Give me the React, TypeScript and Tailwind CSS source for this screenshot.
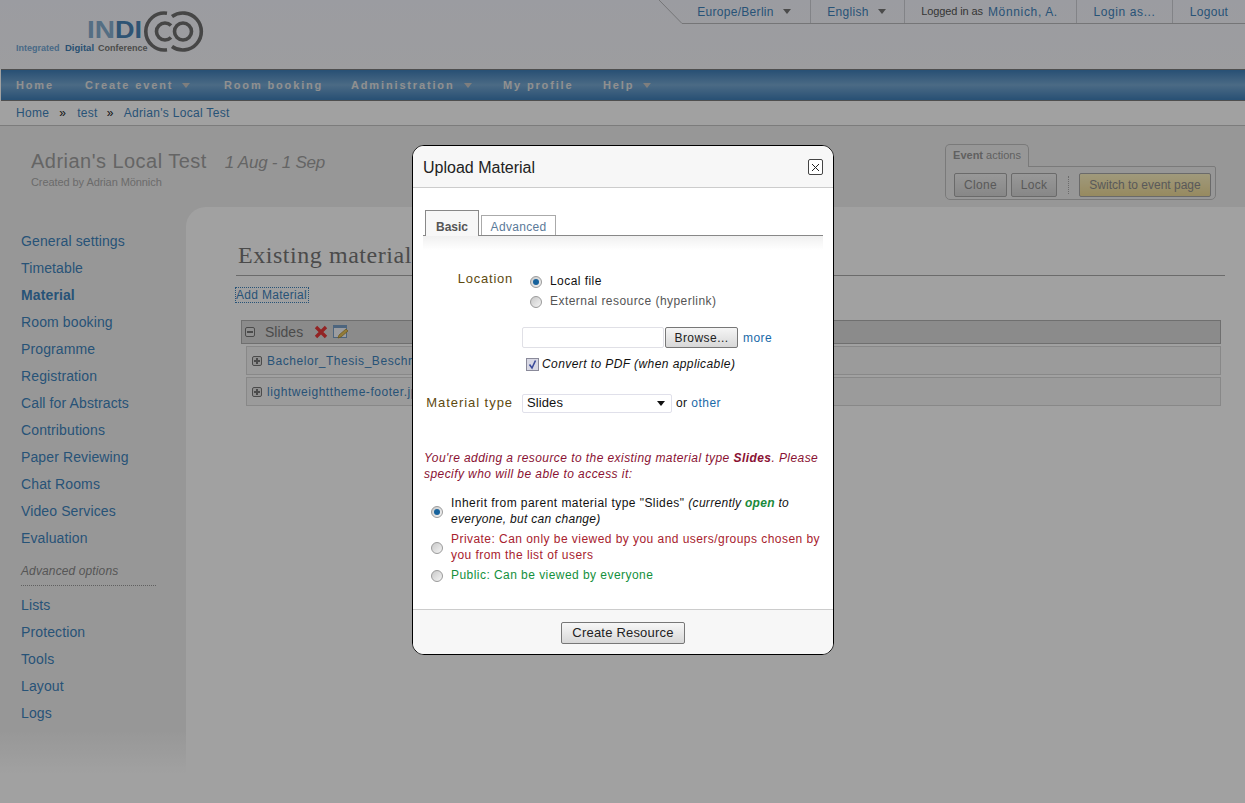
const sideTop = ["General settings", "Timetable", "Material", "Room booking", "Programme", "Registration", "Call for Abstracts", "Contributions", "Paper Reviewing", "Chat Rooms", "Video Services", "Evaluation"];
const sideBottom = ["Lists", "Protection", "Tools", "Layout", "Logs"];

function Caret({ className = "border-t-[#c8c8c8]" }: { className?: string }) {
  return <span className={`inline-block w-0 h-0 border-x-[4.5px] border-x-transparent border-t-[5px] ${className}`} />;
}

function Logo() {
  return (
    <svg width="200" height="50" viewBox="0 0 200 50" className="block">
      <text x="71" y="32" fontFamily="Liberation Sans" fontWeight="700" fontSize="24" fill="#86aed0" textLength="28" lengthAdjust="spacingAndGlyphs">IN</text>
      <text x="99" y="32" fontFamily="Liberation Sans" fontWeight="700" fontSize="24" fill="#4a85b8" textLength="27" lengthAdjust="spacingAndGlyphs">DI</text>
      <text x="0" y="45" fontFamily="Liberation Sans" fontWeight="700" fontSize="9" fill="#73a8d6">Integrated</text>
      <text x="49" y="45" fontFamily="Liberation Sans" fontWeight="700" fontSize="9.5" fill="#3f7fb5">Digital</text>
      <text x="82" y="45" fontFamily="Liberation Sans" fontWeight="700" fontSize="9" fill="#777">Conference</text>
      <path d="M151 7.2 A18.5 18.5 0 1 0 151 43.8" fill="none" stroke="#6f6f6f" strokeWidth="3.6" />
      <path d="M155 19.5 A8.5 8.5 0 1 0 155 31.5" fill="none" stroke="#6f6f6f" strokeWidth="3.6" />
      <path d="M156 10.5 A18.5 18.5 0 1 1 156 40.5" fill="none" stroke="#6f6f6f" strokeWidth="3.6" />
      <circle cx="167" cy="25.5" r="8.5" fill="none" stroke="#6f6f6f" strokeWidth="3.6" />
    </svg>
  );
}

function Radio({ on, className = "" }: { on?: boolean; className?: string }) {
  return (
    <span className={`flex items-center justify-center w-[12px] h-[12px] rounded-full border border-[#9a9a9a] bg-gradient-to-br from-[#c9c9c9] to-[#f4f4f4] shrink-0 ${className}`}>
      {on && <span className="w-[6px] h-[6px] rounded-full bg-[#17629c]" />}
    </span>
  );
}

function TopItem({ children, width, caret }: { children: React.ReactNode; width: string; caret?: boolean }) {
  return (
    <div className={`flex items-center justify-center gap-[9px] h-full border-l border-[#cfd0d6] tracking-[0.3px] ${width}`}>
      {children}
      {caret && <Caret className="border-t-[#777]" />}
    </div>
  );
}

function NavItem({ label, width, caret }: { label: string; width: string; caret?: boolean }) {
  return (
    <div className={`flex items-center gap-[9px] shrink-0 ${width}`}>
      <span>{label}</span>
      {caret && <Caret />}
    </div>
  );
}

function Expander({ minus }: { minus?: boolean }) {
  return (
    <span className="relative block w-[10px] h-[10px] border border-[#777] rounded-[2px] bg-[#e5e5e5] shrink-0">
      <span className="absolute left-[1px] right-[1px] top-[3px] h-[2px] bg-[#777]" />
      {!minus && <span className="absolute top-[1px] bottom-[1px] left-[3px] w-[2px] bg-[#777]" />}
    </span>
  );
}

function MaterialModal() {
  return (
    <div className="absolute left-[412px] top-[145px] w-[422px] h-[510px] flex flex-col bg-white border border-black rounded-[12px] overflow-hidden text-[12px] tracking-[0.45px] text-[#111]">
      <div className="flex items-center justify-between h-[42px] shrink-0 pl-[10px] pr-[10px] bg-[#f7f7f7] border-b border-[#cccccc]">
        <span className="text-[16px] tracking-[0px] text-[#222] mt-[2px]">Upload Material</span>
        <span className="flex items-center justify-center w-[15px] h-[16px] border border-[#444] rounded-[2px] bg-white mt-[1px]">
          <svg width="9" height="9" viewBox="0 0 9 9"><path d="M1 1L8 8M8 1L1 8" stroke="#222" strokeWidth="1" /></svg>
        </span>
      </div>

      <div className="flex-1 relative">
        <div className="mx-[10px] mt-[22px] flex items-end h-[26px] border-b border-[#888] pl-[2px] gap-[2px]">
          <div className="flex items-center justify-center w-[54px] h-[26px] pt-[7px] -mb-px bg-[#f7f7f7] border border-b-0 border-[#888] font-bold tracking-[0px] text-[#555]">Basic</div>
          <div className="flex items-center justify-center w-[75px] h-[20px] pt-[3px] border border-b-0 border-[#aaa] tracking-[0.3px] text-[#5b7a99]">Advanced</div>
        </div>
        <div className="mx-[10px] h-[14px] bg-gradient-to-b from-[#f0f0f0] to-white" />

        <div className="flex mt-[22px]">
          <div className="w-[100px] -mt-[3px] text-right text-[13px] tracking-[0.75px] text-[#5e4a10]">Location</div>
          <div className="ml-[17px]">
            <div className="flex items-center gap-[8px] h-[20px]">
              <Radio on />
              <span className="mt-[-2px]">Local file</span>
            </div>
            <div className="flex items-center gap-[8px] h-[20px] text-[#555]">
              <Radio />
              <span className="mt-[-2px]">External resource (hyperlink)</span>
            </div>
          </div>
        </div>

        <div className="flex items-center ml-[109px] mt-[15px] h-[21px]">
          <div className="w-[142px] h-[21px] border border-[#e0e0e6] rounded-[2px] bg-white" />
          <div className="flex items-center justify-center w-[73px] h-[21px] ml-[1px] border border-[#777] rounded-[2px] bg-gradient-to-b from-[#f5f5f5] to-[#d8d8d8] text-[#222] tracking-[0.45px]">Browse...</div>
          <span className="ml-[5px] text-[#1a6aa8]">more</span>
        </div>

        <div className="flex items-center ml-[113px] mt-[6px] h-[20px]">
          <span className="flex items-center justify-center w-[13px] h-[13px] border border-[#8a8a9a] bg-[#d8d8e4]">
            <svg width="11" height="11" viewBox="0 0 11 11"><path d="M2.5 5.5L5 9L8.5 1.5" fill="none" stroke="#3a4a9a" strokeWidth="1.6" /></svg>
          </span>
          <span className="ml-[3px] italic tracking-[0.42px] text-[#111]">Convert to PDF (when applicable)</span>
        </div>

        <div className="flex items-center mt-[19px] h-[20px]">
          <div className="w-[100px] text-right text-[13px] tracking-[0.95px] text-[#5e4a10] whitespace-nowrap">Material type</div>
          <div className="flex items-center justify-between w-[150px] h-[19px] ml-[9px] pl-[4px] pr-[6px] border border-[#e0e0ea] rounded-[2px] text-[#111]">
            <span className="text-[13px] tracking-[0.1px]">Slides</span>
            <Caret className="border-t-[#111]" />
          </div>
          <span className="ml-[4px]">or <span className="text-[#1a6aa8]">other</span></span>
        </div>

        <p className="mx-[11px] mt-[37px] text-[#8a1233] italic leading-[16px] tracking-[0.43px]">
          You're adding a resource to the existing material type <b>Slides</b>. Please specify who will be able to access it:
        </p>

        <div className="mt-[13px] ml-[18px] mr-[8px] flex flex-col leading-[16px] gap-[4px]">
          <div className="flex items-center gap-[8px]">
            <Radio on className="mt-[2px]" />
            <div>
              Inherit from parent material type "Slides" <i className="tracking-[0.3px]">(currently <b className="text-[#1a8a3a]">open</b> to everyone, but can change)</i>
            </div>
          </div>
          <div className="flex items-center gap-[8px] text-[#a8222e]">
            <Radio className="mt-[2px]" />
            <div>Private: Can only be viewed by you and users/groups chosen by you from the list of users</div>
          </div>
          <div className="flex items-center gap-[8px] text-[#14903c]">
            <Radio className="mt-[2px]" />
            <div>Public: Can be viewed by everyone</div>
          </div>
        </div>
      </div>

      <div className="flex items-center justify-center h-[45px] shrink-0 bg-[#f7f7f7] border-t border-[#cccccc]">
        <div className="flex items-center justify-center w-[124px] h-[22px] mt-[1px] pt-[1px] border border-[#777] rounded-[2px] bg-gradient-to-b from-[#f7f7f7] to-[#d8d8d8] text-[13px] tracking-[0.2px] text-[#222]">Create Resource</div>
      </div>
    </div>
  );
}

export default function App() {
  return (
    <div className="relative w-[1245px] h-[803px] overflow-hidden bg-white font-['Liberation_Sans',Arial,sans-serif] text-[#3f84bd]">
      {/* header */}
      <div className="relative h-[69px] bg-gradient-to-b from-[#f6f8ff] to-[#f9f9fc] pl-[16px]">
        <div className="pt-[6px]"><Logo /></div>
        <div className="absolute right-0 top-0 h-[24px] flex items-stretch text-[12px]">
          <svg width="24" height="24" viewBox="0 0 24 24" className="block shrink-0">
            <path d="M0 0L23 23.5" stroke="#b9b9bd" fill="none" />
          </svg>
          <div className="flex items-stretch border-b border-[#b9b9bd] -ml-[1px]">
            <div className="flex items-center justify-center gap-[9px] w-[128px] pr-[4px] tracking-[0.3px] h-full">Europe/Berlin <Caret className="border-t-[#777]" /></div>
            <TopItem width="w-[94px] pr-[2px]" caret>English</TopItem>
            <TopItem width="w-[172px] pr-[2px]">
              <span className="-mr-[4px] text-[11px] tracking-[-0.1px] text-[#555]">Logged in as</span> <span className="tracking-[0.65px]">Mönnich, A.</span>
            </TopItem>
            <TopItem width="w-[96px] tracking-[0.6px]">Login as...</TopItem>
            <TopItem width="w-[73px]">Logout</TopItem>
          </div>
        </div>
      </div>

      {/* main nav */}
      <div className="flex items-center h-[32px] ml-px pl-[15px] pt-[1px] border-y border-[#7d7d7d] bg-gradient-to-b from-[#3f7fb8] via-[#77a9d3] to-[#3f7fb8] text-[11px] font-bold tracking-[1.85px] text-[#e4e4e4]">
        <NavItem label="Home" width="w-[69px]" />
        <NavItem label="Create event" width="w-[139px]" caret />
        <NavItem label="Room booking" width="w-[127px]" />
        <NavItem label="Administration" width="w-[152px]" caret />
        <NavItem label="My profile" width="w-[100px]" />
        <NavItem label="Help" width="w-[60px]" caret />
      </div>

      {/* breadcrumb */}
      <div className="flex items-center h-[25px] pl-[16px] bg-white border-b border-[#c4c4c4] text-[12px] tracking-[0.3px]">
        <span>Home</span>
        <span className="ml-[10px] mr-[11px] text-[#222] text-[12px]">»</span>
        <span>test</span>
        <span className="ml-[9px] mr-[10px] text-[#222] text-[12px]">»</span>
        <span>Adrian's Local Test</span>
      </div>

      {/* event title */}
      <div className="flex justify-between h-[81px] bg-[#f0f0f0] pl-[31px] pr-[29px]">
        <div className="pt-[20px]">
          <div className="flex items-baseline text-[#a0a0a0]">
            <span className="text-[20px] tracking-[0.47px]">Adrian's Local Test</span>
            <span className="ml-[18px] text-[17px] italic tracking-[-0.25px]">1 Aug - 1 Sep</span>
          </div>
          <div className="-mt-[2px] text-[11px] tracking-[-0.08px] text-[#aaa]">Created by Adrian Mönnich</div>
        </div>
        <div className="pt-[18px] w-[271px]">
          <div className="flex items-center justify-center w-[84px] h-[23px] pb-[2px] -mb-px relative bg-[#f0f0f0] border border-b-0 border-[#c2c2c2] rounded-t-[5px] text-[11px] text-[#999]">
            <b className="mr-[3px]">Event</b> actions
          </div>
          <div className="flex items-center h-[34px] pl-[8px] pt-[3px] border border-[#c2c2c2] rounded-b-[5px] rounded-tr-[2px] text-[12px] tracking-[0.35px] text-[#8e8e8e]">
            <div className="flex items-center justify-center w-[53px] h-[24px] border border-[#a8a8a8] rounded-[2px] bg-gradient-to-b from-[#f2f2f2] to-[#d6d6d6]">Clone</div>
            <div className="flex items-center justify-center w-[46px] h-[24px] ml-[4px] border border-[#a8a8a8] rounded-[2px] bg-gradient-to-b from-[#f2f2f2] to-[#d6d6d6]">Lock</div>
            <div className="h-[18px] ml-[11px] border-l border-dotted border-[#aaa]" />
            <div className="flex items-center justify-center w-[132px] h-[24px] ml-[10px] border border-[#a8a8a8] rounded-[2px] tracking-[0px] bg-gradient-to-b from-[#fdf3c4] to-[#efdb98]">Switch to event page</div>
          </div>
        </div>
      </div>

      {/* body */}
      <div className="flex h-[596px] bg-[linear-gradient(#f0f0f0_88%,#ffffff_95%)]">
        <div className="w-[186px] shrink-0 pt-[21px] pl-[21px] text-[14px] tracking-[0.12px]">
          {sideTop.map((item) => (
            <div key={item} className={`h-[27px] leading-[27px] ${item === "Material" ? "font-bold" : ""}`}>{item}</div>
          ))}
          <div className="mt-[8px] w-[135px] h-[26px] pb-[3px] flex items-center border-b border-dotted border-[#999] text-[12px] italic text-[#888]">Advanced options</div>
          <div className="mt-[6px]">
            {sideBottom.map((item) => (
              <div key={item} className="h-[27px] leading-[27px]">{item}</div>
            ))}
          </div>
        </div>
        <div className="flex-1 bg-white rounded-tl-[20px] pl-[50px] pr-[20px] pt-[32px]">
          <div className="pl-[2px] h-[37px] border-b border-[#aaa] font-['Liberation_Serif',serif] text-[24px] leading-[32px] tracking-[0.55px] text-[#777]">Existing material</div>
          <div className="mt-[11px] -ml-px inline-flex h-[16px] items-center pr-px border border-dotted border-[#3f84bd] text-[12px] tracking-[0.3px]">Add Material</div>
          <div className="ml-[5px] mr-[4px] mt-[14px]">
            <div className="flex items-center h-[24px] pl-[3px] border border-[#b0b0b0] bg-[#dddddd] text-[14px] text-[#777]">
              <Expander minus />
              <span className="ml-[10px] tracking-[0px]">Slides</span>
              <svg width="14" height="14" viewBox="0 0 14 14" className="ml-[11px]"><path d="M2 2L12 12M12 2L2 12" stroke="#e83a3a" strokeWidth="3.4" /></svg>
              <svg width="16" height="16" viewBox="0 0 16 16" className="ml-[5px]">
                <rect x="0.5" y="1.5" width="13" height="12" fill="#f5f8fc" stroke="#7aa0c8" />
                <rect x="1" y="2" width="12" height="2" fill="#7aa0c8" />
                <path d="M5 14L6 11L13 5L15 7L8 13Z" fill="#e8c45a" stroke="#a8842a" strokeWidth="0.7" />
              </svg>
            </div>
            <div className="flex items-center ml-[5px] mt-[2px] h-[29px] pl-[5px] border border-[#d8d8d8] bg-[#f6f6f6] text-[12px] tracking-[0.55px]">
              <Expander /><span className="ml-[5px]">Bachelor_Thesis_Beschreibung.pdf</span>
            </div>
            <div className="flex items-center ml-[5px] mt-[2px] h-[29px] pl-[5px] border border-[#d8d8d8] bg-[#f6f6f6] text-[12px] tracking-[0.55px]">
              <Expander /><span className="ml-[5px]">lightweighttheme-footer.jpg</span>
            </div>
          </div>
        </div>
      </div>

      {/* dimmed backdrop */}
      <div className="absolute inset-0 bg-black/[0.37]" />
      <MaterialModal />
    </div>
  );
}
